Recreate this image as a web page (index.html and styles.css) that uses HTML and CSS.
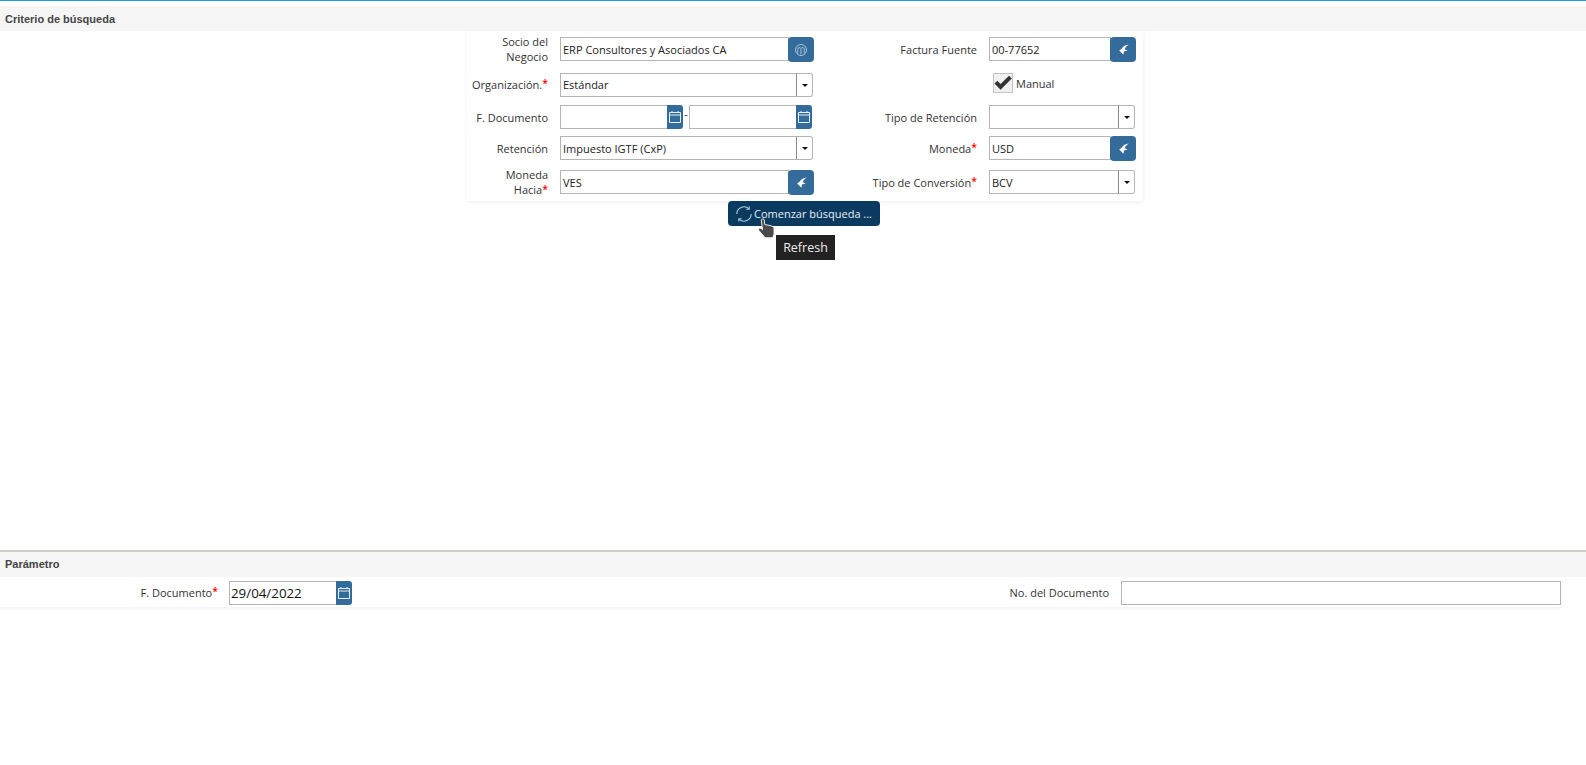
FILE: index.html
```html
<!DOCTYPE html>
<html lang="es">
<head>
<meta charset="utf-8">
<title>Criterio de búsqueda</title>
<link rel="stylesheet" href="styles.css">
</head>
<body>
<svg class="defs" width="0" height="0" aria-hidden="true">
  <defs>
    <symbol id="cal" viewBox="0 0 14 14">
      <path d="M1.500 2.500h11v10h-11zM1.500 5h11M4 1v2M10 1v2" fill="none" stroke="#e8f0f6" stroke-width="1"/>
    </symbol>
    <symbol id="back" viewBox="0 0 12 13">
      <path d="M11.800 1.500C8.600 2 6 3.200 4.800 5.600L2.200 7.400 6.400 11.800 7 8.400 10.600 7.400 7.600 6.200C8.200 4.400 9.800 2.800 11.800 1.500Z" fill="#fff"/>
    </symbol>
  </defs>
</svg>

<section class="search">
  <h2 class="band">Criterio de búsqueda</h2>
  <div class="form">
    <label class="lbl two">Socio del<br>Negocio</label>
    <div class="combo"><span class="input grow">ERP Consultores y Asociados CA</span><button class="ibtn" type="button">
      <svg width="14" height="14" viewBox="0 0 14 14" fill="none" stroke="#a9c2d8" stroke-width="1"><circle cx="7" cy="7" r="5.500"/><path d="M3.800 10.500V6.200a1.700 1.700 0 0 1 3.200-.8 1.700 1.700 0 0 1 3.200 .8v4.300M7 5.400v6"/></svg>
    </button></div>
    <label class="lbl">Factura Fuente</label>
    <div class="combo"><span class="input grow">00-77652</span><button class="ibtn" type="button"><svg width="12" height="13"><use href="#back"/></svg></button></div>

    <label class="lbl up">Organización.<i>*</i></label>
    <div class="combo sel"><span class="input grow up">Estándar</span><span class="arrow"></span></div>
    <span class="spacer"></span>
    <div class="check"><span class="box"><svg width="20" height="20" viewBox="0 0 20 20"><path d="M1.500 10.500l2.800-2.800 3.300 3.400L16 2.800 18.800 5.600 7.600 16.800Z" fill="#333"/></svg></span><span>Manual</span></div>

    <label class="lbl">F. Documento</label>
    <div class="range">
      <div class="combo date"><span class="input grow"></span><span class="cal"><svg width="14" height="14"><use href="#cal"/></svg></span></div>
      <span class="dash">-</span>
      <div class="combo date"><span class="input grow"></span><span class="cal"><svg width="14" height="14"><use href="#cal"/></svg></span></div>
    </div>
    <label class="lbl">Tipo de Retención</label>
    <div class="combo sel narrow"><span class="input grow"></span><span class="arrow"></span></div>

    <label class="lbl">Retención</label>
    <div class="combo sel"><span class="input grow">Impuesto IGTF (CxP)</span><span class="arrow"></span></div>
    <label class="lbl">Moneda<i>*</i></label>
    <div class="combo"><span class="input grow">USD</span><button class="ibtn" type="button"><svg width="12" height="13"><use href="#back"/></svg></button></div>

    <label class="lbl two low">Moneda<br>Hacia<i>*</i></label>
    <div class="combo"><span class="input grow">VES</span><button class="ibtn" type="button"><svg width="12" height="13"><use href="#back"/></svg></button></div>
    <label class="lbl">Tipo de Conversión<i>*</i></label>
    <div class="combo sel narrow"><span class="input grow">BCV</span><span class="arrow"></span></div>
  </div>

  <div class="actions">
    <div class="action-wrap">
      <button class="start" type="button">
        <svg width="16" height="16" viewBox="0 0 16 16" fill="none" stroke="#b9cddd" stroke-width="1.100"><path d="M.8 8a7.200 7.200 0 0 1 12-5.300M15.200 8a7.200 7.200 0 0 1-12 5.300"/><path d="M13.200 .4v2.800h-2.900M2.800 15.600v-2.800h2.900"/></svg>
        <span>Comenzar búsqueda ...</span>
      </button>
      <svg class="hand" width="21" height="21" viewBox="0 0 22 26" preserveAspectRatio="none">
        <path d="M5 1.500c1-.9 2.400-.4 2.600 1l.5 5.500 6.500 1.600c2 .5 3.200 1.700 3.200 3.700V20l-1.400 4.500H8.500L2 15.500c-.8-1.200-.5-2.400.5-2.800.9-.4 1.800 0 2.500.8l.8 1-1.300-11.500c-.1-.7 0-1.200.5-1.500z" fill="#4a4a4a" stroke="#fff" stroke-width="1"/>
      </svg>
      <div class="tip">Refresh</div>
    </div>
  </div>
</section>

<section class="params">
  <h2 class="band">Parámetro</h2>
  <div class="pform">
    <label class="lbl up">F. Documento<i>*</i></label>
    <div class="combo date big"><span class="input grow">29/04/2022</span><span class="cal"><svg width="14" height="14"><use href="#cal"/></svg></span></div>
    <label class="lbl up shift">No. del Documento</label>
    <span class="input"></span>
  </div>
</section>
</body>
</html>
```
FILE: styles.css
```css
* { box-sizing: border-box; }
html, body { margin: 0; padding: 0; background: #fff; }
body { height: 765px; overflow: hidden; border-top: 1px solid #1e9ae0; font-family: "Open Sans", "Noto Sans", sans-serif; font-size: 11px; color: #333; }
.defs { position: absolute; }

.band { margin: 0; height: 25px; display: flex; align-items: center; padding-left: 5px; background: #f6f6f6; font: bold 11px "Liberation Sans", Arial, sans-serif; color: #444; }
.params .band { padding-bottom: 2px; }

.search { height: 549px; padding-top: 5px; }

.form { margin-left: 467px; width: 676px; height: 170px; padding: 6px 7px 0 0; display: grid;
  grid-template-columns: 81px 254px 151px 147px; grid-template-rows: 36px 32px 31px 34px 30px; column-gap: 12px;
  box-shadow: 0 2px 4px rgba(0,0,0,.05), 1px 0 3px rgba(0,0,0,.03); }

.lbl { height: 24px; display: flex; align-items: center; justify-content: flex-end; text-align: right; line-height: 15px; color: #333; white-space: nowrap; }
.lbl.two { display: block; height: auto; margin-top: -3px; white-space: normal; }
.lbl.two.low { margin-top: -3px; }
.lbl.shift { padding-right: 1px; }
.lbl i { color: #f00; font-style: normal; font-weight: 600; font-size: 10.500px; transform: translateY(-1px); }
.lbl.two i { display: inline-block; }
.up { padding-bottom: 2px; }

.combo { display: flex; height: 24px; }
.combo.sel { width: 253px; }
.combo.sel.narrow { width: 146px; }
.input { display: flex; align-items: center; height: 24px; padding: 0 2px; border: 1px solid #b5b5b5; background: #fff; color: #222; white-space: nowrap; }
.input.up { padding-bottom: 2px; }
.grow { flex: 1; min-width: 0; }

.ibtn { width: 26px; height: 25px; margin-left: -1px; padding: 0; border: 0; border-radius: 4px; background: #336b9b; display: flex; align-items: center; justify-content: center; flex: none; }

.sel .input { border-right: 0; }
.arrow { width: 17px; height: 24px; flex: none; position: relative; border: 1px solid #b5b5b5; border-left-color: #8a8a8a; border-radius: 0 3px 3px 0; background: #fff; }
.arrow::after { content: ""; position: absolute; left: 5px; top: 10px; border: 3px solid transparent; border-top-color: #111; border-bottom: 0; }

.check { display: flex; align-items: flex-start; gap: 3px; padding-left: 4px; line-height: 22px; color: #333; }
.box { width: 20px; height: 20px; background: #f0f0f0; border: 1px solid #c4c4c4; display: flex; align-items: center; justify-content: center; }
.box svg { flex: none; }

.range { display: flex; align-items: flex-start; }
.range .combo { width: 123px; }
.dash { width: 6px; text-align: center; line-height: 18px; }
.cal { width: 16px; height: 24px; flex: none; margin-left: -1px; background: #336b9b; border-radius: 0 3px 3px 0; display: flex; align-items: center; justify-content: center; }

.actions { margin-left: 728px; }
.action-wrap { position: relative; width: 152px; }
.start { width: 152px; height: 25px; padding: 0 0 0 8px; border: 0; border-radius: 4px; background: #0b3a60; color: #e8eef3; font: 11px "Open Sans", "Noto Sans", sans-serif; display: flex; align-items: center; gap: 2px; white-space: nowrap; }
.hand { position: absolute; left: 29px; top: 17px; }
.tip { position: absolute; left: 48px; top: 34px; width: 59px; height: 25px; display: flex; align-items: center; justify-content: center; background: #222; color: #eee; font-size: 12.500px; }

.params { border-top: 2px solid #d0d0c8; }
.pform { width: 1561px; height: 30px; padding-top: 4px; display: grid; grid-template-columns: 218px 123px 747px 440px; column-gap: 11px; align-items: start; box-shadow: 0 2px 3px rgba(0,0,0,.05); }
.pform .input { height: 24px; }
.big .input { font-size: 13.330px; color: #111; padding-left: 1px; padding-bottom: 1px; }
```
